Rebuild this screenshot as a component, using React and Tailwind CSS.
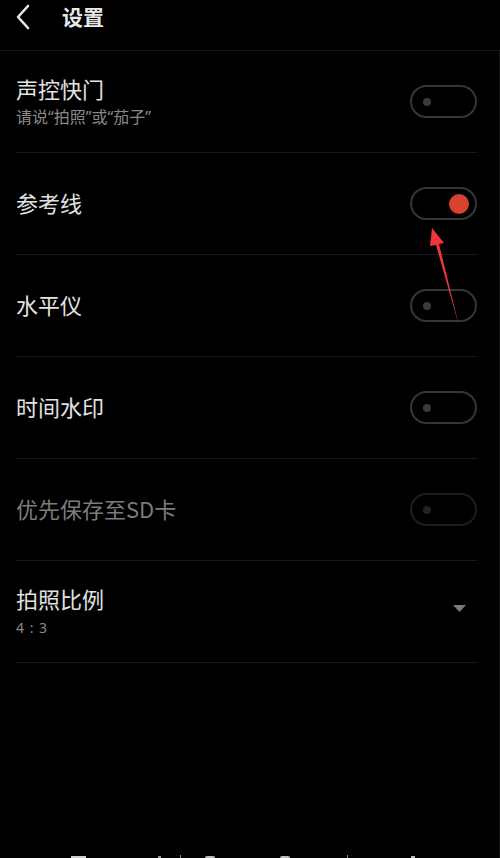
import React from 'react';

const font = { fontFamily: '"Noto Sans CJK SC", "Noto Sans", sans-serif' };
const subFont = { fontFamily: '"Noto Sans", "Noto Sans CJK SC", sans-serif' };

function Toggle({ on, disabled }) {
  return (
    <div
      className={
        'w-[67px] h-[33px] rounded-full border-2 flex items-center ' +
        (disabled ? 'border-[#1d1d1d]' : 'border-[#363636]')
      }
    >
      {on ? (
        <div className="ml-auto mr-[6px] w-[20px] h-[20px] rounded-full bg-[#d8422f]" />
      ) : (
        <div
          className={
            'ml-[11px] w-[8px] h-[8px] rounded-full ' +
            (disabled ? 'bg-[#222222]' : 'bg-[#3a3a3a]')
          }
        />
      )}
    </div>
  );
}

function Row({ title, sub, right, disabled }) {
  return (
    <div className="h-[102px] ml-[16px] mr-[22px] border-b border-[#1a1a1a] flex items-center justify-between">
      <div className="flex flex-col -mt-[3px]">
        <div
          className={
            'text-[22px] leading-[30px] ' + (disabled ? 'text-[#7c7c7c]' : 'text-[#e2e2e2]')
          }
        >
          {title}
        </div>
        {sub && (
          <div className="mt-[4px] text-[16px] leading-[21px] text-[#8a8a8a]" style={subFont}>
            {sub}
          </div>
        )}
      </div>
      {right}
    </div>
  );
}

function NavBits() {
  // bottom navigation bar, cut off by the screenshot
  return (
    <div className="h-[3px] flex items-end pl-[71px]">
      <div className="w-[15px] h-[2px] bg-[#cfcfcf]" />
      <div className="ml-[72px] w-[3px] h-[2px] bg-[#9a9a9a]" />
      <div className="ml-[19px] w-[1px] h-[3px] bg-[#8a8a8a]" />
      <div className="ml-[24px] w-[10px] h-[2px] bg-[#bcbcbc] rounded-t-full" />
      <div className="ml-[65px] w-[10px] h-[2px] bg-[#bcbcbc] rounded-t-full" />
      <div className="ml-[57px] w-[1px] h-[3px] bg-[#8a8a8a]" />
      <div className="ml-[63px] w-[4px] h-[2px] bg-[#bcbcbc]" />
    </div>
  );
}

export default function App() {
  return (
    <div className="relative w-[500px] h-[858px] bg-black overflow-hidden flex flex-col" style={font}>
      {/* header */}
      <div className="h-[51px] shrink-0 border-b border-[#1a1a1a] flex items-start pt-[4px]">
        <svg width="16" height="26" viewBox="0 0 16 26" className="ml-[15px]">
          <path d="M13 2 L3 13 L13 24" fill="none" stroke="#e8e8e8" strokeWidth="2.6" strokeLinecap="round" strokeLinejoin="round" />
        </svg>
        <div className="ml-[31px] -mt-[3px] text-[21px] leading-[30px] font-bold text-[#e8e8e8]">设置</div>
      </div>

      <div className="flex-1 flex flex-col border-r border-[#141414]">
        <Row title="声控快门" sub="请说“拍照”或“茄子”" right={<Toggle />} />
        <Row title="参考线" right={<Toggle on />} />
        <Row title="水平仪" right={<Toggle />} />
        <Row title="时间水印" right={<Toggle />} />
        <Row title="优先保存至SD卡" right={<Toggle disabled />} disabled />
        <Row
          title="拍照比例"
          sub={<span className="text-[14px] tracking-[1px]">4 : 3</span>}
          right={
            <svg width="13" height="8" viewBox="0 0 13 8" className="mr-[11px] mb-[5px]">
              <path d="M0 0 L13 0 L6.5 7 Z" fill="#7a7a7a" />
            </svg>
          }
        />
        <div className="flex-1" />
        <NavBits />
      </div>

      {/* red annotation arrow, drawn over the list */}
      <svg className="absolute left-0 top-0 pointer-events-none" width="500" height="858">
        <path d="M432 228 L444 243 L439 244 L459 326 L436 245 L430 246 Z" fill="#f0363a" />
      </svg>
    </div>
  );
}
